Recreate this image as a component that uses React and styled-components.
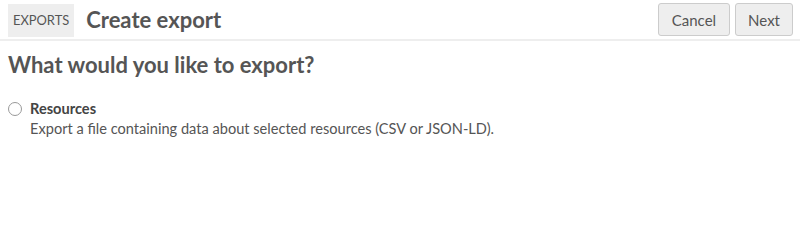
import React from "react";
import styled, { createGlobalStyle } from "styled-components";

const Global = createGlobalStyle`
  html, body { margin: 0; padding: 0; background: #fff; }
  body { font-family: Lato, "Noto Sans", sans-serif; color: #555; }
`;

const Header = styled.header`
  display: flex;
  align-items: center;
  gap: 12px;
  height: 41px;
  padding: 0 7px 0 8px;
  border-bottom: 2px solid #eee;
  box-sizing: border-box;
`;

const Crumb = styled.div`
  display: flex;
  align-items: center;
  height: 33px;
  padding: 0 5px;
  background: #eee;
  font-size: 12.9px;
  color: #555;
  margin-top: 1px;
`;

const Title = styled.h1`
  margin: 0;
  font-size: 22px;
  font-weight: 700;
  color: #555;
  flex: 1;
`;

const Actions = styled.div`
  display: flex;
  gap: 5px;
`;

const Button = styled.button`
  height: 33px;
  padding: 0 ${(p) => p.$pad || 12}px;
  background: #eee;
  border: 1px solid #ccc;
  border-radius: 3px;
  font-family: Lato, sans-serif;
  font-size: 15px;
  color: #555;
`;

const Main = styled.main`
  padding: 10px 8px;
`;

const Heading = styled.h2`
  margin: 0 0 22px;
  font-size: 22px;
  font-weight: 700;
  color: #555;
`;

const Option = styled.label`
  display: grid;
  grid-template-columns: 22px 1fr;
  row-gap: 3px;
  font-size: 14.6px;
`;

const Radio = styled.span`
  width: 14px;
  height: 14px;
  border: 1px solid #999;
  border-radius: 50%;
  margin-top: 2px;
  box-sizing: border-box;
`;

const OptTitle = styled.span`
  font-weight: 700;
  color: #444;
`;

const OptDesc = styled.span`
  grid-column: 2;
  color: #555;
`;

export default function App() {
  return (
    <>
      <Global />
      <Header>
        <Crumb>EXPORTS</Crumb>
        <Title>Create export</Title>
        <Actions>
          <Button $pad={13}>Cancel</Button>
          <Button>Next</Button>
        </Actions>
      </Header>
      <Main>
        <Heading>What would you like to export?</Heading>
        <Option>
          <Radio />
          <OptTitle>Resources</OptTitle>
          <OptDesc>Export a file containing data about selected resources (CSV or JSON-LD).</OptDesc>
        </Option>
      </Main>
    </>
  );
}
